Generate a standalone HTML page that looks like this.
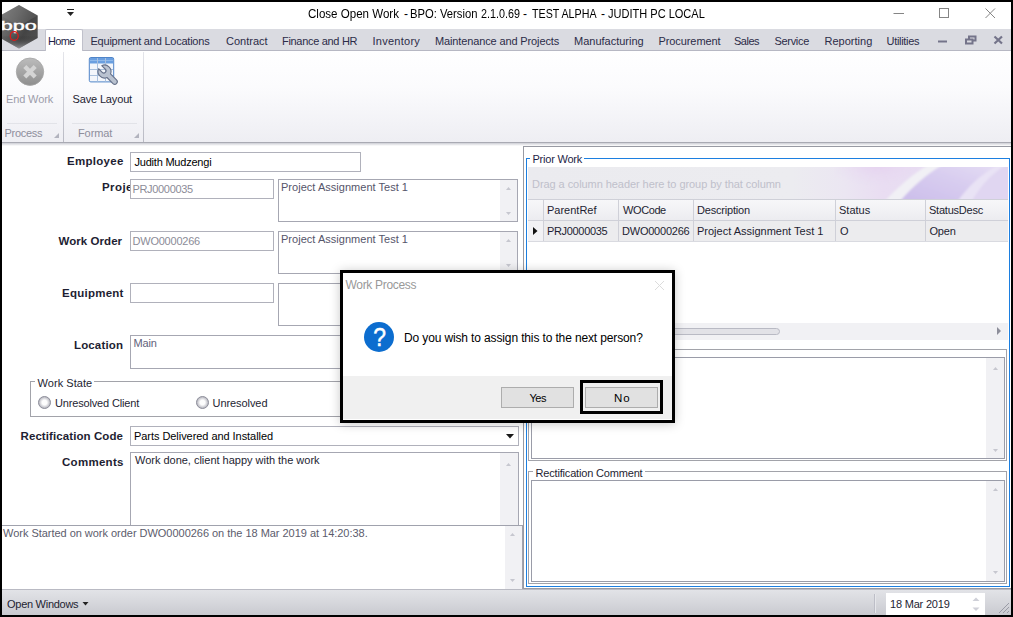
<!DOCTYPE html>
<html><head><meta charset="utf-8"><title>Close Open Work</title>
<style>
*{box-sizing:border-box;margin:0;padding:0}
html,body{width:1013px;height:617px;overflow:hidden;background:#000}
body{position:relative;font-family:"Liberation Sans",sans-serif;font-size:11px}
.a{position:absolute}
.t{position:absolute;white-space:nowrap;line-height:16px;height:16px}
.inp{position:absolute;background:#fff;border:1px solid #a6a7b2}
.sb{position:absolute;background:#f1f1f4}
.grp{position:absolute;border:1px solid #a2a3aa}
</style></head><body>
<div class="a" id="win" style="left:2px;top:2px;width:1009px;height:613px;background:#fff;overflow:hidden"></div>

<!-- title bar -->
<div id="title"><span class="t" style="left:307.50px;top:5.84px;font-size:12px;color:#000;transform:scaleX(0.9628);transform-origin:0 50%;">Close Open Work </span><span class="t" style="left:404.00px;top:5.84px;font-size:12px;color:#000;">- </span><span class="t" style="left:409.50px;top:5.84px;font-size:12px;color:#000;transform:scaleX(0.9368);transform-origin:0 50%;">BPO: Version </span><span class="t" style="left:481.00px;top:5.84px;font-size:12px;color:#000;transform:scaleX(0.8977);transform-origin:0 50%;">2.1.0.69 </span><span class="t" style="left:523.00px;top:5.84px;font-size:12px;color:#000;">- </span><span class="t" style="left:531.50px;top:5.84px;font-size:12px;color:#000;transform:scaleX(0.8904);transform-origin:0 50%;">TEST ALPHA </span><span class="t" style="left:601.00px;top:5.84px;font-size:12px;color:#000;">- </span><span class="t" style="left:608.00px;top:5.84px;font-size:12px;color:#000;transform:scaleX(0.9191);transform-origin:0 50%;">JUDITH PC LOCAL</span></div>
<svg class="a" style="left:880px;top:2px" width="131" height="27" viewBox="0 0 131 27">
 <path d="M13.5 11.5h10.5" stroke="#858585" stroke-width="1" fill="none"/>
 <rect x="59.5" y="6.5" width="9" height="9" stroke="#858585" stroke-width="1" fill="none"/>
 <path d="M105.5 6.5l9.5 9.5M115 6.5l-9.5 9.5" stroke="#858585" stroke-width="1" fill="none"/>
</svg>
<!-- quick access arrow -->
<svg class="a" style="left:66px;top:9px" width="9" height="8" viewBox="0 0 9 8"><path d="M1 0.5h7" stroke="#222" stroke-width="1"/><path d="M1 3h7l-3.5 4z" fill="#222"/></svg>

<!-- tab row -->
<div class="a" style="left:2px;top:29px;width:1009px;height:22px;background:#dadbe1;border-bottom:1px solid #b7b8c3"></div>
<div class="a" style="left:45px;top:29px;width:38px;height:22px;background:#fff;border:1px solid #c0c1cb;border-bottom:none;border-radius:2px 2px 0 0"></div>
<span class="t" style="left:48.00px;top:33.19px;font-size:11px;color:#1e1e46;letter-spacing:-0.667px;">Home</span>
<span class="t" style="left:90.50px;top:33.19px;font-size:11px;color:#2c2c48;letter-spacing:-0.227px;">Equipment and Locations</span>
<span class="t" style="left:226.00px;top:33.19px;font-size:11px;color:#2c2c48;">Contract</span>
<span class="t" style="left:282.00px;top:33.19px;font-size:11px;color:#2c2c48;letter-spacing:-0.308px;">Finance and HR</span>
<span class="t" style="left:372.50px;top:33.19px;font-size:11px;color:#2c2c48;letter-spacing:0.262px;">Inventory</span>
<span class="t" style="left:435.00px;top:33.19px;font-size:11px;color:#2c2c48;letter-spacing:-0.130px;">Maintenance and Projects</span>
<span class="t" style="left:574.00px;top:33.19px;font-size:11px;color:#2c2c48;">Manufacturing</span>
<span class="t" style="left:658.50px;top:33.19px;font-size:11px;color:#2c2c48;letter-spacing:-0.090px;">Procurement</span>
<span class="t" style="left:734.00px;top:33.19px;font-size:11px;color:#2c2c48;letter-spacing:-0.500px;">Sales</span>
<span class="t" style="left:774.50px;top:33.19px;font-size:11px;color:#2c2c48;letter-spacing:-0.317px;">Service</span>
<span class="t" style="left:824.50px;top:33.19px;font-size:11px;color:#2c2c48;letter-spacing:0.013px;">Reporting</span>
<span class="t" style="left:886.50px;top:33.19px;font-size:11px;color:#2c2c48;letter-spacing:-0.312px;">Utilities</span>
<svg class="a" style="left:934px;top:32px" width="74" height="16" viewBox="0 0 74 16">
 <path d="M4 9.5h9" stroke="#74748a" stroke-width="2"/>
 <path d="M35 4.500h6.500v4h-6.500z" stroke="#74748a" stroke-width="2" fill="none"/>
 <path d="M32 7.500h6.500v4h-6.500z" stroke="#74748a" stroke-width="2" fill="#dadbe1"/>
 <path d="M60.500 4.500l7.500 7M68 4.500l-7.500 7" stroke="#74748a" stroke-width="2.200"/>
</svg>

<!-- logo -->
<svg class="a" style="left:2px;top:3px" width="42" height="48" viewBox="0 0 42 48">
 <defs><linearGradient id="lg" x1="0" y1="0" x2="1" y2="0.600"><stop offset="0" stop-color="#808080"/><stop offset="0.450" stop-color="#606060"/><stop offset="0.750" stop-color="#444"/><stop offset="1" stop-color="#4e4e4e"/></linearGradient>
 <linearGradient id="lf" x1="0" y1="0" x2="0" y2="1"><stop offset="0.700" stop-color="#000" stop-opacity="0"/><stop offset="1" stop-color="#dadbe1" stop-opacity="0.550"/></linearGradient></defs>
 <polygon points="17,2 35.700,12.500 35.700,35 17,45.500 -1.700,35 -1.700,12.500" fill="url(#lg)"/>
 <polygon points="17,2 35.700,12.500 17,23 -1.700,12.500" fill="#888" opacity="0.250"/>
 <polygon points="17,2 35.700,12.500 35.700,35 17,45.500 -1.700,35 -1.700,12.500" fill="url(#lf)"/>
 <text x="-1.200" y="26.600" font-family="Liberation Sans, sans-serif" font-size="12" fill="#fff" stroke="#fff" stroke-width="0.350" textLength="36" lengthAdjust="spacingAndGlyphs">bpo</text>
 <ellipse cx="12.200" cy="33" rx="4" ry="4.400" fill="none" stroke="#e01818" stroke-width="1.200"/>
</svg>

<!-- ribbon -->
<div class="a" style="left:2px;top:51px;width:1009px;height:92px;background:linear-gradient(#ffffff 0,#fbfbfd 40%,#eeeef3 100%);border-bottom:1px solid #a9aab3"></div>
<div class="a" style="left:2px;top:143px;width:1009px;height:3px;background:linear-gradient(#cdced5,#fff)"></div>
<div class="a" style="left:63px;top:52px;width:1px;height:90px;background:linear-gradient(#e4e5ea,#b9bac4)"></div>
<div class="a" style="left:143px;top:52px;width:1px;height:90px;background:linear-gradient(#e4e5ea,#b9bac4)"></div>
<div class="a" style="left:7px;top:123px;width:50px;height:1px;background:#e2e3e8"></div>
<div class="a" style="left:72px;top:123px;width:65px;height:1px;background:#e2e3e8"></div>
<!-- End Work icon -->
<svg class="a" style="left:15px;top:57px" width="30" height="30" viewBox="0 0 30 30">
 <defs><linearGradient id="g1" x1="0" y1="0" x2="0" y2="1"><stop offset="0" stop-color="#bcbcbc"/><stop offset="1" stop-color="#8e8e8e"/></linearGradient></defs>
 <circle cx="15" cy="14.700" r="13.700" fill="url(#g1)" stroke="#a4a4a4" stroke-width="0.800"/>
 <path d="M9.800 9.500l10.400 10.400M20.200 9.500l-10.400 10.400" stroke="#d4d4d4" stroke-width="4.300" stroke-linecap="butt"/>
</svg>
<span class="t" style="left:6.00px;top:91.19px;font-size:11px;color:#9c9caa;letter-spacing:-0.129px;">End Work</span>
<span class="t" style="left:4.50px;top:125.19px;font-size:11px;color:#8e8e9c;letter-spacing:-0.300px;">Process</span>
<!-- Save Layout icon -->
<svg class="a" style="left:88px;top:56px" width="32" height="32" viewBox="0 0 32 32">
 <rect x="1.300" y="1.500" width="24.400" height="24.400" rx="1.500" fill="#f3f6fb" stroke="#4f84c8" stroke-width="1"/>
 <rect x="1.800" y="2" width="23.400" height="5.500" fill="#6a9fe0"/>
 <path d="M2 4.500h23" stroke="#8db8ea" stroke-width="1"/>
 <path d="M2 13.500h23M2 19.500h23M9.500 2v23.500M17.500 2v23.500" stroke="#a9c0dd" stroke-width="1"/>
 <path transform="translate(16.500,15.500) rotate(-45)" d="M-2.200 -1L-2.200 -6.100A6.500 6.500 0 0 0 -2.500 6L-2.500 14.500A2.500 2.500 0 0 0 2.500 14.500L2.500 6A6.500 6.500 0 0 0 2.200 -6.100L2.200 -1A2.200 2.200 0 0 1 -2.200 -1Z" fill="#b9c2d0" stroke="#667189" stroke-width="1.100" stroke-linejoin="round"/>
</svg>
<span class="t" style="left:72.50px;top:91.19px;font-size:11px;color:#1e1e32;letter-spacing:-0.150px;">Save Layout</span>
<span class="t" style="left:78.00px;top:125.19px;font-size:11px;color:#8e8e9c;letter-spacing:-0.100px;">Format</span>
<svg class="a" style="left:54px;top:133px" width="5" height="5"><path d="M5 0v5h-5z" fill="#b2b3be"/></svg>
<svg class="a" style="left:134px;top:133px" width="5" height="5"><path d="M5 0v5h-5z" fill="#b2b3be"/></svg>

<!-- form -->
<span class="t" style="left:67.00px;top:153.02px;font-size:11.5px;color:#1e1e32;font-weight:700;letter-spacing:0.286px;">Employee</span>
<div class="inp" style="left:130px;top:152px;width:231px;height:20px;border-color:#b0b1bb"></div>
<span class="t" style="left:134.50px;top:154.19px;font-size:11px;color:#000;letter-spacing:-0.214px;">Judith Mudzengi</span>

<div class="a" style="left:90px;top:179px;width:40px;height:20px;overflow:hidden"><span class="t" style="left:12.00px;top:0.22px;font-size:11.5px;color:#1e1e32;font-weight:700;letter-spacing:0.417px;">Project</span></div>
<div class="inp" style="left:130px;top:179px;width:144px;height:20px;border-color:#b0b1bb"></div>
<span class="t" style="left:132.50px;top:181.19px;font-size:11px;color:#8c8c98;letter-spacing:-0.333px;">PRJ0000035</span>
<div class="inp" style="left:278px;top:179px;width:240px;height:43px"></div>
<div class="sb" style="left:500px;top:180px;width:17px;height:41px"></div>
<span class="t" style="left:281.00px;top:179.19px;font-size:11px;color:#55556a;letter-spacing:0.025px;">Project Assignment Test 1</span>

<span class="t" style="left:58.50px;top:233.02px;font-size:11.5px;color:#1e1e32;font-weight:700;letter-spacing:0.056px;">Work Order</span>
<div class="inp" style="left:130px;top:231px;width:144px;height:20px;border-color:#b0b1bb"></div>
<span class="t" style="left:132.50px;top:233.19px;font-size:11px;color:#8c8c98;letter-spacing:-0.222px;">DWO0000266</span>
<div class="inp" style="left:278px;top:231px;width:240px;height:43px"></div>
<div class="sb" style="left:500px;top:232px;width:17px;height:41px"></div>
<span class="t" style="left:281.00px;top:231.19px;font-size:11px;color:#55556a;letter-spacing:0.025px;">Project Assignment Test 1</span>

<span class="t" style="left:62.00px;top:285.02px;font-size:11.5px;color:#1e1e32;font-weight:700;letter-spacing:0.250px;">Equipment</span>
<div class="inp" style="left:130px;top:283px;width:144px;height:20px;border-color:#b0b1bb"></div>
<div class="inp" style="left:278px;top:283px;width:240px;height:43px"></div>

<span class="t" style="left:74.00px;top:337.02px;font-size:11.5px;color:#1e1e32;font-weight:700;letter-spacing:0.143px;">Location</span>
<div class="inp" style="left:130px;top:335px;width:388px;height:34px"></div>
<span class="t" style="left:133.50px;top:335.19px;font-size:11px;color:#62627a;letter-spacing:-0.167px;">Main</span>

<div class="grp" style="left:30px;top:381px;width:489px;height:36px"></div>
<div class="a" style="left:35px;top:376px;width:59px;height:12px;background:#fff"></div>
<span class="t" style="left:37.50px;top:375.19px;font-size:11px;color:#1e1e32;letter-spacing:0.056px;">Work State</span>
<svg class="a" style="left:37px;top:395px" width="15" height="15" viewBox="0 0 15 15"><defs><radialGradient id="rg" cx="0.5" cy="0.5" r="0.5"><stop offset="0.400" stop-color="#fdfdfd"/><stop offset="0.850" stop-color="#c3c3ca"/><stop offset="1" stop-color="#b0b0b8"/></radialGradient></defs><circle cx="7.500" cy="7.500" r="6" fill="url(#rg)" stroke="#8f909c" stroke-width="1"/></svg>
<span class="t" style="left:55.00px;top:395.19px;font-size:11px;color:#1e1e32;letter-spacing:-0.163px;">Unresolved Client</span>
<svg class="a" style="left:195px;top:395px" width="15" height="15" viewBox="0 0 15 15"><circle cx="7.500" cy="7.500" r="6" fill="url(#rg)" stroke="#8f909c" stroke-width="1"/></svg>
<span class="t" style="left:212.50px;top:395.19px;font-size:11px;color:#1e1e32;letter-spacing:-0.067px;">Unresolved</span>

<span class="t" style="left:20.50px;top:428.02px;font-size:11.5px;color:#1e1e32;font-weight:700;letter-spacing:0.088px;">Rectification Code</span>
<div class="inp" style="left:130px;top:426px;width:389px;height:20px;border-color:#b0b1bb"></div>
<span class="t" style="left:134.00px;top:428.19px;font-size:11px;color:#000;letter-spacing:-0.054px;">Parts Delivered and Installed</span>
<svg class="a" style="left:506px;top:434px" width="8" height="5"><path d="M0 0h8l-4 4.500z" fill="#1a1a1a"/></svg>

<span class="t" style="left:62.00px;top:454.02px;font-size:11.5px;color:#1e1e32;font-weight:700;letter-spacing:0.286px;">Comments</span>
<div class="inp" style="left:130px;top:452px;width:389px;height:80px"></div>
<div class="sb" style="left:500px;top:453px;width:18px;height:76px"></div>
<span class="t" style="left:135.00px;top:451.89px;font-size:11px;color:#1e1e32;letter-spacing:-0.014px;">Work done, client happy with the work</span>

<!-- log -->
<div class="a" style="left:2px;top:525px;width:521px;height:64px;background:#fff;border-top:1px solid #a0a2ad;border-right:1px solid #a0a2ad"></div>
<div class="sb" style="left:505px;top:526px;width:17px;height:63px"></div>
<span class="t" style="left:3.00px;top:525.19px;font-size:11px;color:#5c5c6c;letter-spacing:-0.029px;">Work Started on work order DWO0000266 on the 18 Mar 2019 at 14:20:38.</span>


<!-- right panel -->
<div class="a" style="left:523px;top:146px;width:488px;height:443px;border:1px solid #989aa3;border-right:none;background:#fff"></div>
<div class="a" style="left:526px;top:158px;width:484px;height:429px;border:1px solid #1c7fe0"></div>
<div class="a" style="left:530px;top:152px;width:54px;height:12px;background:#fff"></div>
<span class="t" style="left:532.50px;top:151.19px;font-size:11px;color:#1e1e46;letter-spacing:-0.222px;">Prior Work</span>
<!-- grid -->
<div class="a" style="left:528px;top:167px;width:480px;height:32px;background:linear-gradient(90deg,#ebebef 0,#ececf0 55%,#ebe6f2 66%,#e9ddf2 74%,#e4daf2 100%)"></div>
<svg class="a" style="left:528px;top:167px" width="480" height="32" viewBox="0 0 480 32">
 <defs><linearGradient id="sw" x1="0" y1="1" x2="1" y2="0"><stop offset="0" stop-color="#cbbdea"/><stop offset="0.600" stop-color="#d9cef0"/><stop offset="1" stop-color="#e5ddf4"/></linearGradient>
 <filter id="bl" x="-10%" y="-30%" width="120%" height="160%"><feGaussianBlur stdDeviation="1.300"/></filter>
 <radialGradient id="pk" cx="0.5" cy="0.200" r="0.600"><stop offset="0" stop-color="#e4cdef"/><stop offset="1" stop-color="#e9e0f2" stop-opacity="0"/></radialGradient>
 <clipPath id="cp"><rect x="0" y="0" width="480" height="32"/></clipPath></defs>
 <g clip-path="url(#cp)"><g filter="url(#bl)">
 <ellipse cx="350" cy="8" rx="45" ry="26" fill="url(#pk)"/>
 <path d="M372 34C386 18 398 8 414 -2L470 -2C452 8 440 20 430 34z" fill="url(#sw)"/>
 <path d="M357 34C372 18 384 8 400 -2L414 -2C398 8 386 18 372 34z" fill="#f1f0f5"/>
 <path d="M430 34C440 20 452 8 470 -2L478 -2C462 8 452 20 444 34z" fill="#e9e3f5"/>
 <path d="M444 34C452 20 462 8 478 -2L490 -2L490 34z" fill="#e0d6f1"/>
 </g></g>
</svg>
<span class="t" style="left:532.00px;top:176.19px;font-size:11px;color:#bfc0cb;letter-spacing:-0.062px;">Drag a column header here to group by that column</span>
<div class="a" style="left:528px;top:199px;width:480px;height:22px;background:linear-gradient(#f7f7f9,#ececf0);border-top:1px solid #cfd0d8;border-bottom:1px solid #cfd0d8"></div>
<div class="a" style="left:528px;top:221px;width:480px;height:21px;background:#ececee;border-bottom:1px solid #d9dae0"></div>
<div class="a" style="left:543px;top:199px;width:1px;height:42px;background:#cfd0d8"></div>
<div class="a" style="left:618px;top:199px;width:1px;height:42px;background:#cfd0d8"></div>
<div class="a" style="left:693px;top:199px;width:1px;height:42px;background:#cfd0d8"></div>
<div class="a" style="left:835px;top:199px;width:1px;height:42px;background:#cfd0d8"></div>
<div class="a" style="left:925px;top:199px;width:1px;height:42px;background:#cfd0d8"></div>
<div class="a" style="left:528px;top:221px;width:15px;height:20px;background:#f2f2f5"></div>
<svg class="a" style="left:533px;top:227px" width="5" height="8"><path d="M0 0l4.500 4-4.500 4z" fill="#111"/></svg>
<span class="t" style="left:547.00px;top:202.19px;font-size:11px;color:#1e1e32;">ParentRef</span>
<span class="t" style="left:623.00px;top:202.19px;font-size:11px;color:#1e1e32;letter-spacing:-0.400px;">WOCode</span>
<span class="t" style="left:697.00px;top:202.19px;font-size:11px;color:#1e1e32;letter-spacing:-0.200px;">Description</span>
<span class="t" style="left:839.00px;top:202.19px;font-size:11px;color:#1e1e32;">Status</span>
<span class="t" style="left:929.00px;top:202.19px;font-size:11px;color:#1e1e32;letter-spacing:-0.222px;">StatusDesc</span>
<span class="t" style="left:547.00px;top:223.19px;font-size:11px;color:#1e1e32;letter-spacing:-0.333px;">PRJ0000035</span>
<span class="t" style="left:622.00px;top:223.19px;font-size:11px;color:#1e1e32;letter-spacing:-0.222px;">DWO0000266</span>
<span class="t" style="left:697.00px;top:223.19px;font-size:11px;color:#1e1e32;">Project Assignment Test 1</span>
<span class="t" style="left:840.00px;top:223.19px;font-size:11px;color:#1e1e32;">O</span>
<span class="t" style="left:929.50px;top:223.19px;font-size:11px;color:#1e1e32;letter-spacing:-0.200px;">Open</span>
<!-- hscroll -->
<div class="a" style="left:528px;top:323px;width:480px;height:17px;background:#f1f1f4"></div>
<div class="a" style="left:545px;top:328px;width:235px;height:7px;background:#e2e2e7;border:1px solid #b9bac4;border-radius:4px"></div>
<svg class="a" style="left:997px;top:327px" width="5" height="8"><path d="M0 0l4 4-4 4z" fill="#8d8e9a"/></svg>
<!-- group 2 -->
<div class="grp" style="left:528px;top:349px;width:479px;height:112px"></div>
<div class="inp" style="left:531px;top:357px;width:474px;height:102px;border-color:#9a9ca8"></div>
<div class="sb" style="left:986px;top:358px;width:18px;height:100px"></div>
<!-- group 3 -->
<div class="grp" style="left:528px;top:471px;width:479px;height:113px"></div>
<div class="a" style="left:533px;top:466px;width:112px;height:12px;background:#fff"></div>
<span class="t" style="left:535.50px;top:465.19px;font-size:11px;color:#1e1e32;letter-spacing:-0.175px;">Rectification Comment</span>
<div class="inp" style="left:531px;top:480px;width:474px;height:102px;border-color:#9a9ca8"></div>
<div class="sb" style="left:986px;top:481px;width:18px;height:100px"></div>

<!-- scroll arrows -->
<svg class="a" style="left:0;top:0" width="1013" height="617" viewBox="0 0 1013 617">
 <g fill="#c6c7cf">
  <path d="M506 190h5l-2.500-3z"/><path d="M506 212h5l-2.500 3z"/>
  <path d="M506 242h5l-2.500-3z"/><path d="M506 264h5l-2.500 3z"/>
  <path d="M506 466h5l-2.500-3z"/>
  <path d="M510 536h5l-2.500-3z"/><path d="M510 579h5l-2.500 3z"/>
  <path d="M993 370h5l-2.500-3z"/><path d="M993 449h5l-2.500 3z"/>
  <path d="M993 491h5l-2.500-3z"/><path d="M993 571h5l-2.500 3z"/>
 </g>
</svg>
<!-- status bar -->
<div class="a" style="left:2px;top:589px;width:1009px;height:26px;background:linear-gradient(#e2e3e7 0,#d6d7dc 50%,#c9cad0 100%);border-top:1px solid #b9bac3"></div>
<span class="t" style="left:7.00px;top:596.19px;font-size:11px;color:#1e1e32;letter-spacing:-0.273px;">Open Windows</span>
<svg class="a" style="left:82px;top:602px" width="7" height="4"><path d="M0.500 0h6l-3 3.500z" fill="#222"/></svg>
<div class="a" style="left:874px;top:594px;width:1px;height:19px;background:#bdbec7"></div>
<div class="a" style="left:875px;top:594px;width:1px;height:19px;background:#e6e7eb"></div>
<div class="a" style="left:886px;top:593px;width:99px;height:22px;background:#fff"></div>
<span class="t" style="left:890.00px;top:595.89px;font-size:11px;color:#1e1e32;letter-spacing:-0.200px;">18 Mar 2019</span>
<svg class="a" style="left:972px;top:597px" width="8" height="15" viewBox="0 0 8 15"><path d="M0.500 4h7l-3.500-3.500z" fill="#cfd0d8"/><path d="M0.500 10.500h7l-3.500 3.500z" fill="#cfd0d8"/></svg>
<svg class="a" style="left:998px;top:602px" width="12" height="12" viewBox="0 0 12 12"><path d="M11 1L1 11M11 5L5 11M11 9L9 11" stroke="#9a9ba6" stroke-width="1"/></svg>

<!-- dialog -->
<div class="a" style="left:340px;top:270px;width:335px;height:153px;background:#fff;border:3px solid #000;box-shadow:0 1px 10px rgba(0,0,0,0.220)"></div>
<div class="a" style="left:343px;top:376px;width:329px;height:43px;background:#f0f0f0"></div>
<span class="t" style="left:345.50px;top:276.84px;font-size:12px;color:#999;letter-spacing:-0.318px;">Work Process</span>
<svg class="a" style="left:654px;top:280px" width="11" height="11" viewBox="0 0 11 11"><path d="M1 1l9 9M10 1l-9 9" stroke="#dcdcdc" stroke-width="1"/></svg>
<svg class="a" style="left:363px;top:321px" width="32" height="32" viewBox="0 0 32 32">
 <circle cx="16" cy="16" r="15" fill="#0c6dcf"/>
 <text transform="translate(16.700,25.200) scale(0.880,1)" text-anchor="middle" font-family="Liberation Sans, sans-serif" font-size="26" fill="#fff" stroke="#fff" stroke-width="0.500">?</text>
</svg>
<span class="t" style="left:404.00px;top:329.84px;font-size:12px;color:#000;letter-spacing:-0.133px;">Do you wish to assign this to the next person?</span>
<div class="a" style="left:501px;top:387px;width:73px;height:21px;background:#e1e1e1;border:1px solid #adadad"></div>
<div class="a" style="left:580px;top:380px;width:83px;height:34px;border:3px solid #000"></div>
<div class="a" style="left:585px;top:387px;width:73px;height:21px;background:#e1e1e1;border:1px solid #adadad"></div>
<span class="t" style="left:529.50px;top:389.69px;font-size:11px;color:#000;letter-spacing:-0.500px;">Yes</span>
<span class="t" style="left:614.00px;top:389.52px;font-size:11.5px;color:#000;letter-spacing:1.000px;">No</span>
</body></html>
